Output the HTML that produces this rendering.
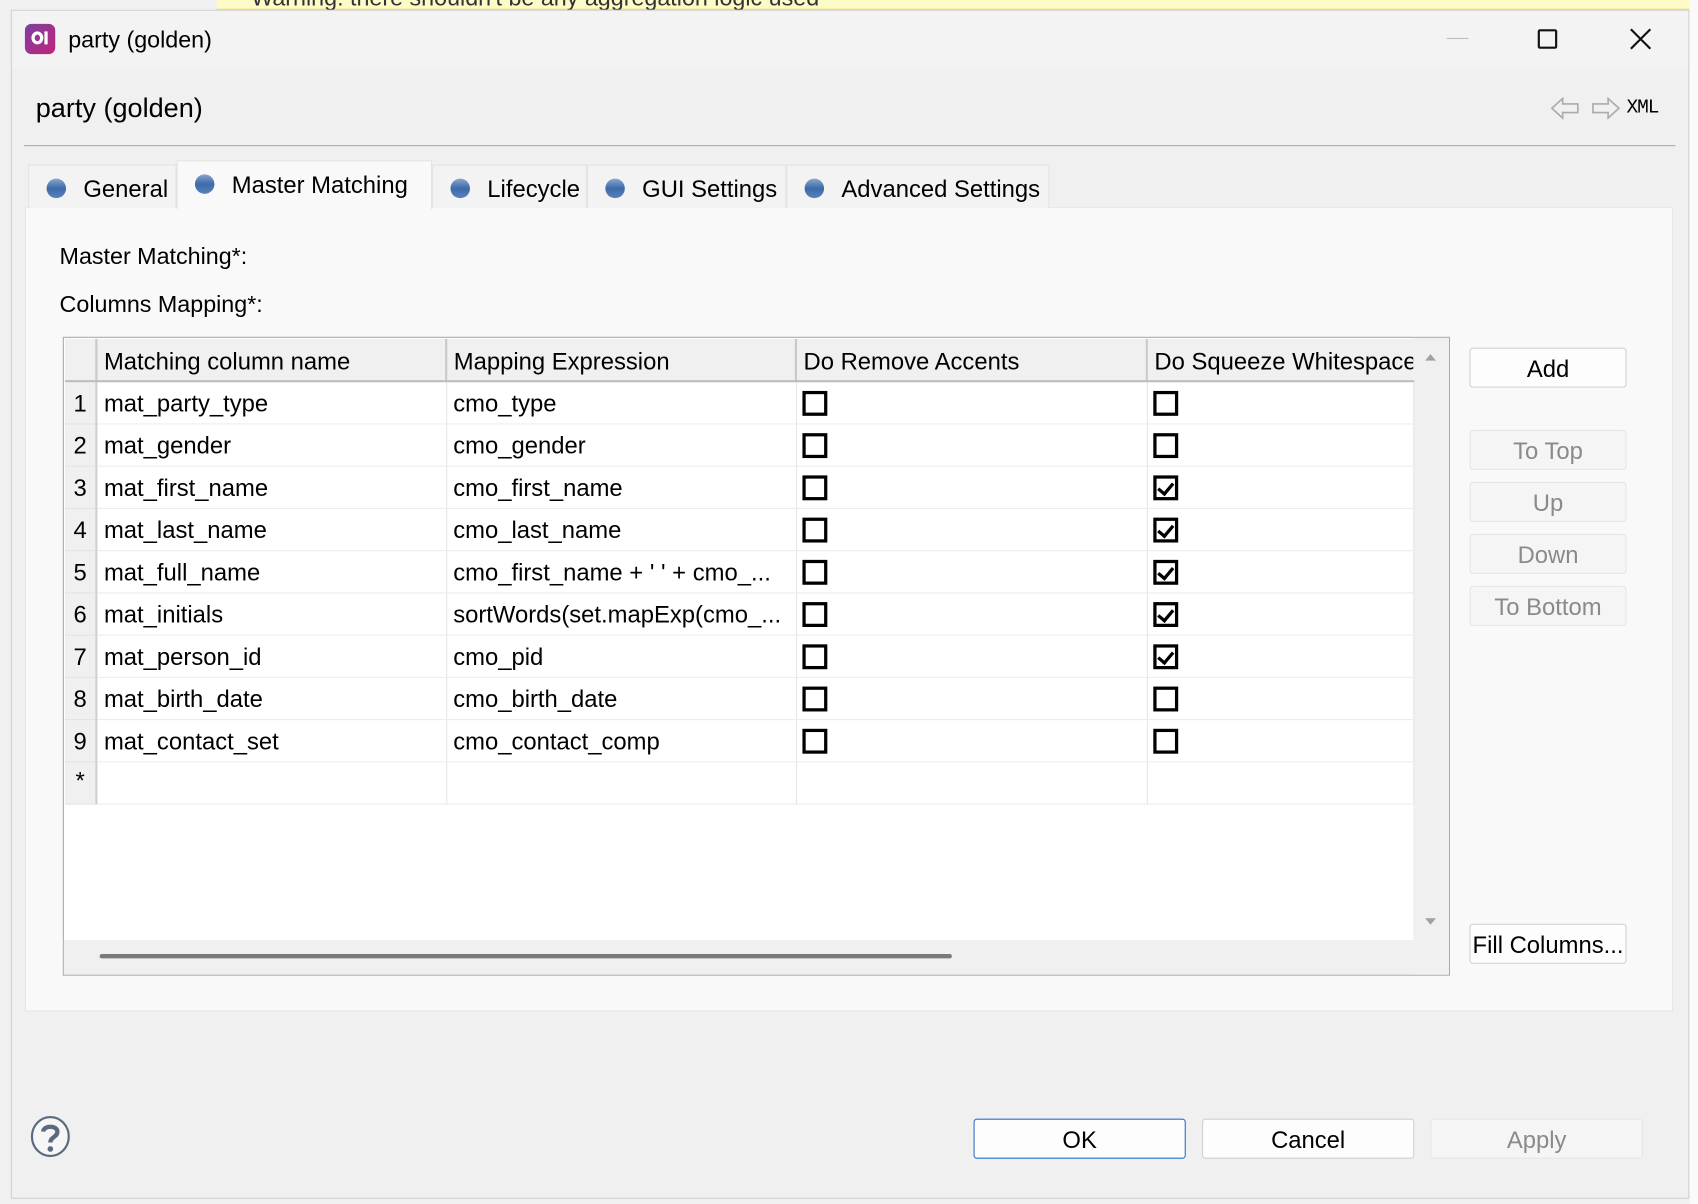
<!DOCTYPE html>
<html><head><meta charset="utf-8"><style>
*{margin:0;padding:0;box-sizing:border-box}
html,body{width:1698px;height:1204px;overflow:hidden;background:#fff}
#w{position:absolute;left:0;top:0;width:1568px;height:1112px;transform:scale(1.08291);transform-origin:0 0;font-family:"Liberation Sans",sans-serif;color:#000}
.a{position:absolute}
.t{font-size:21.5px;white-space:nowrap}
.btn{position:absolute;background:#fdfdfd;border:1px solid #d0d0d0;border-radius:3px;font-size:22px;text-align:center;line-height:38px}
.dis{background:#f5f5f5;border-color:#e6e6e6;color:#8a8a8a}
table{border-collapse:collapse;table-layout:fixed;font-size:22px}
td,th{height:39px;border-right:1px solid #e6e6e6;border-bottom:1px solid #ececec;padding:3px 6px 0;white-space:nowrap;overflow:hidden;text-align:left;font-weight:normal}
th{background:#f0f0f0;border-right:2px solid #c9c9c9;border-bottom:2px solid #bdbdbd}
td.n{background:#f0f0f0;text-align:center;padding:2px 0 0;border-right:2px solid #d0d0d0;border-bottom:1px solid #e2e2e2}
.cb{display:inline-block;width:23px;height:23px;border:3px solid #000;vertical-align:middle;position:relative;top:-2px;margin-left:-1px}
.ck::after{content:"";position:absolute;left:4px;top:1px;width:6px;height:11px;border:solid #000;border-width:0 3px 3px 0;transform:rotate(40deg)}
.tab{position:absolute;top:152px;height:40px;background:#f3f3f3;border:1px solid #e3e3e3;border-bottom:none;font-size:22px;line-height:44px;white-space:nowrap}
.dot{display:inline-block;width:18px;height:18px;border-radius:50%;background:linear-gradient(#8aa6cc,#3d6aa8 50%,#5a82bb);vertical-align:middle;margin:0 16px 0 16px;position:relative;top:-2px}
</style></head><body><div id="w">
<div class="a" style="left:0;top:0;width:1568px;height:1112px;background:#f0f0f0"></div>
<div class="a" style="left:200px;top:0;width:1365px;height:9px;background:#fdfbc8;border-bottom:1px solid #e6dc6a"></div>
<div class="a t" style="left:232px;top:-14px;color:#333">Warning: there shouldn't be any aggregation logic used</div>
<div class="a" style="left:1560px;top:0;width:8px;height:1112px;background:#fafafa"></div>
<div class="a" style="left:10px;top:9px;width:1550px;height:1098px;background:#f0f0f0;border:1px solid #cfcfcf"></div>
<div class="a" style="left:11px;top:10px;width:1548px;height:52px;background:#f3f3f3"></div>
<div class="a" style="left:23px;top:22px;width:28px;height:28px;border-radius:6px;background:linear-gradient(135deg,#7b3fa0,#c0267a)"></div>
<div class="a" style="left:29px;top:29px;width:11px;height:12px;border:3px solid #fff;border-radius:50%"></div>
<div class="a" style="left:41px;top:29px;width:3px;height:12px;background:#fff"></div>
<div class="a t" style="left:63px;top:25px">party (golden)</div>
<div class="a" style="left:1336px;top:35px;width:20px;height:1px;background:#bbb"></div>
<div class="a" style="left:1420px;top:27px;width:18px;height:18px;border:2px solid #111;border-radius:2px"></div>
<svg class="a" style="left:1504px;top:25px" width="22" height="22"><path d="M2 2L20 20M20 2L2 20" stroke="#111" stroke-width="2"/></svg>
<div class="a" style="left:33px;top:86px;font-size:25px">party (golden)</div>
<svg class="a" style="left:1430px;top:86px" width="72" height="28"><path d="M3 14L13 5V10H27V18H13V23Z" fill="none" stroke="#aaa" stroke-width="1.5"/><path d="M65 14L55 5V10H41V18H55V23Z" fill="none" stroke="#aaa" stroke-width="1.5"/></svg>
<div class="a" style="left:1502px;top:90px;font-size:18px;font-family:'Liberation Mono',monospace;letter-spacing:-1px">XML</div>
<div class="a" style="left:22px;top:134px;width:1525px;height:1px;background:#a8a8a8"></div>
<div class="a" style="left:23px;top:191px;width:1522px;height:743px;background:#f9f9f9;border:1px solid #e6e6e6"></div>
<div class="tab" style="left:26px;width:137px"><span class="dot"></span>General</div>
<div class="tab" style="left:399px;width:143px"><span class="dot"></span>Lifecycle</div>
<div class="tab" style="left:542px;width:184px"><span class="dot"></span>GUI Settings</div>
<div class="tab" style="left:726px;width:243px"><span class="dot"></span>Advanced Settings</div>
<div class="tab" style="left:163px;top:148px;height:45px;width:236px;background:#f9f9f9;line-height:44px"><span class="dot"></span>Master Matching</div>
<div class="a t" style="left:55px;top:225px">Master Matching*:</div>
<div class="a t" style="left:55px;top:269px">Columns Mapping*:</div>
<div class="a" style="left:58px;top:311px;width:1281px;height:590px;background:#fff;border:1px solid #a9a9a9"></div>
<div class="a" style="left:1305px;top:312px;width:33px;height:588px;background:#f0f0f0"></div>
<div class="a" style="left:59px;top:868px;width:1279px;height:32px;background:#f0f0f0"></div>
<div class="a" style="left:92px;top:881px;width:787px;height:4px;background:#7a7a7a;border-radius:2px"></div>
<svg class="a" style="left:1315px;top:325px" width="12" height="10"><path d="M1 8L6 2L11 8Z" fill="#a0a0a0"/></svg>
<svg class="a" style="left:1315px;top:846px" width="12" height="10"><path d="M1 2L6 8L11 2Z" fill="#a0a0a0"/></svg>
<table class="a" style="left:60px;top:313px;width:1245px">
<colgroup><col style="width:29px"><col style="width:323px"><col style="width:323px"><col style="width:324px"><col style="width:246px"></colgroup>
<tr><th style="border-bottom:2px solid #bdbdbd"></th><th>Matching column name</th><th>Mapping Expression</th><th>Do Remove Accents</th><th style="border-right:none">Do Squeeze Whitespace</th></tr>
<tr><td class="n">1</td><td>mat_party_type</td><td>cmo_type</td><td><span class="cb"></span></td><td><span class="cb"></span></td></tr>
<tr><td class="n">2</td><td>mat_gender</td><td>cmo_gender</td><td><span class="cb"></span></td><td><span class="cb"></span></td></tr>
<tr><td class="n">3</td><td>mat_first_name</td><td>cmo_first_name</td><td><span class="cb"></span></td><td><span class="cb ck"></span></td></tr>
<tr><td class="n">4</td><td>mat_last_name</td><td>cmo_last_name</td><td><span class="cb"></span></td><td><span class="cb ck"></span></td></tr>
<tr><td class="n">5</td><td>mat_full_name</td><td>cmo_first_name + ' ' + cmo_...</td><td><span class="cb"></span></td><td><span class="cb ck"></span></td></tr>
<tr><td class="n">6</td><td>mat_initials</td><td>sortWords(set.mapExp(cmo_...</td><td><span class="cb"></span></td><td><span class="cb ck"></span></td></tr>
<tr><td class="n">7</td><td>mat_person_id</td><td>cmo_pid</td><td><span class="cb"></span></td><td><span class="cb ck"></span></td></tr>
<tr><td class="n">8</td><td>mat_birth_date</td><td>cmo_birth_date</td><td><span class="cb"></span></td><td><span class="cb"></span></td></tr>
<tr><td class="n">9</td><td>mat_contact_set</td><td>cmo_contact_comp</td><td><span class="cb"></span></td><td><span class="cb"></span></td></tr>
<tr><td class="n" style="vertical-align:top;line-height:30px">*</td><td></td><td></td><td></td><td></td></tr>
</table>
<div class="btn" style="left:1357px;top:321px;width:145px;height:37px">Add</div>
<div class="btn dis" style="left:1357px;top:397px;width:145px;height:37px">To Top</div>
<div class="btn dis" style="left:1357px;top:445px;width:145px;height:37px">Up</div>
<div class="btn dis" style="left:1357px;top:493px;width:145px;height:37px">Down</div>
<div class="btn dis" style="left:1357px;top:541px;width:145px;height:37px">To Bottom</div>
<div class="btn" style="left:1357px;top:853px;width:145px;height:37px">Fill Columns...</div>
<svg class="a" style="left:27px;top:1030px" width="40" height="40"><ellipse cx="19.5" cy="19.5" rx="17" ry="18" fill="#f6f6f6" stroke="#5a6a80" stroke-width="2"/><path d="M13 15C13 9 26 9 26 15C26 20 19.5 20 19.5 25" fill="none" stroke="#5a6a80" stroke-width="4"/><circle cx="19.5" cy="31" r="2.6" fill="#5a6a80"/></svg>
<div class="btn" style="left:899px;top:1033px;width:196px;height:37px;border-color:#2b6fc9">OK</div>
<div class="btn" style="left:1110px;top:1033px;width:196px;height:37px">Cancel</div>
<div class="btn dis" style="left:1321px;top:1033px;width:196px;height:37px">Apply</div>
</div></body></html>
